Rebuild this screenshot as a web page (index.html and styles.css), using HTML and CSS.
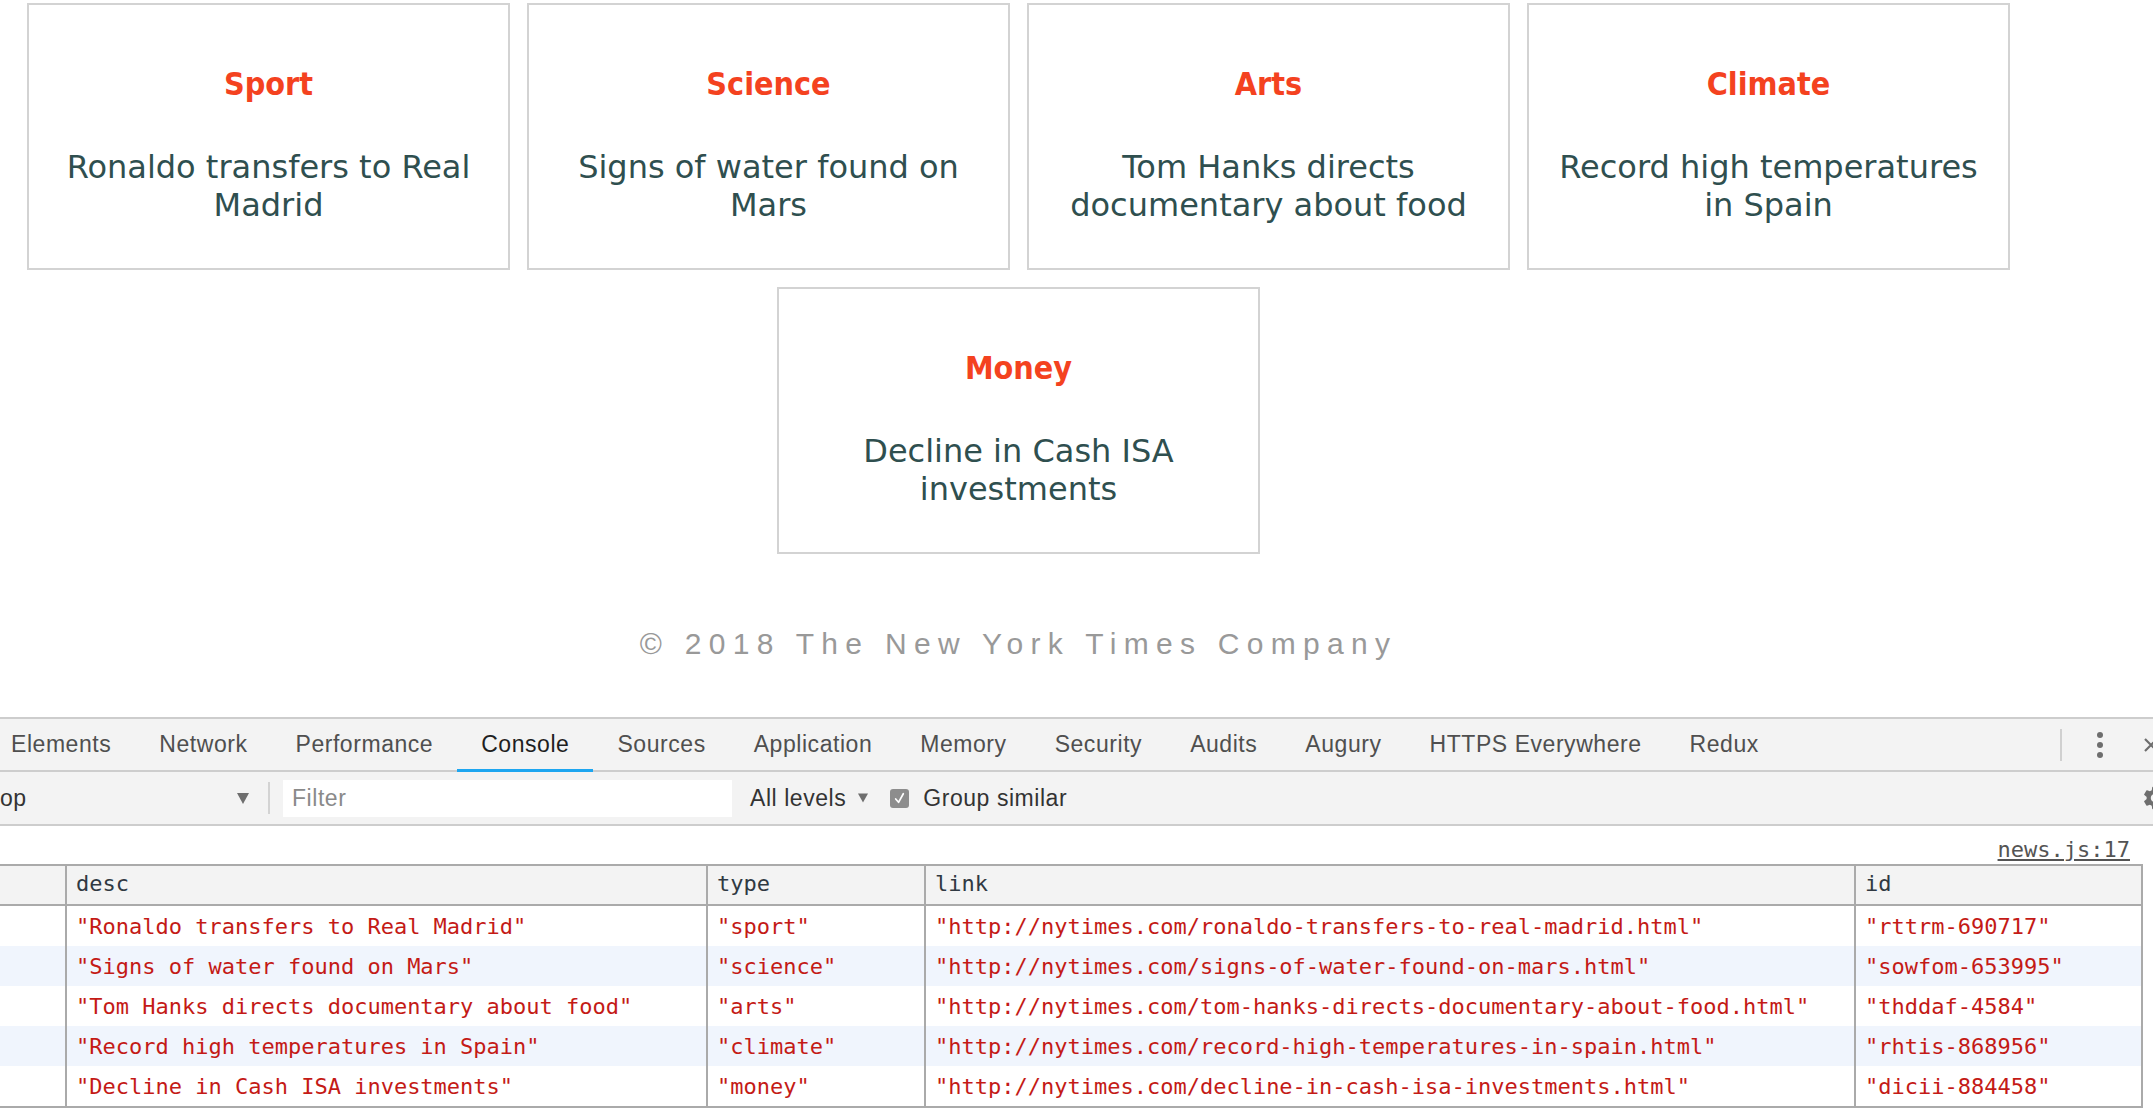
FILE: index.html
```html
<!DOCTYPE html>
<html lang="en">
<head>
<meta charset="utf-8">
<title>News</title>
<link rel="stylesheet" href="styles.css">
</head>
<body>
<div class="page">
  <section class="cards">
    <article class="card">
      <h2 class="card-type">Sport</h2>
      <p class="card-desc">Ronaldo transfers to Real Madrid</p>
    </article>
    <article class="card">
      <h2 class="card-type">Science</h2>
      <p class="card-desc">Signs of water found on Mars</p>
    </article>
    <article class="card">
      <h2 class="card-type">Arts</h2>
      <p class="card-desc">Tom Hanks directs documentary about food</p>
    </article>
    <article class="card">
      <h2 class="card-type">Climate</h2>
      <p class="card-desc">Record high temperatures in Spain</p>
    </article>
    <article class="card">
      <h2 class="card-type">Money</h2>
      <p class="card-desc">Decline in Cash ISA investments</p>
    </article>
  </section>
  <footer class="copyright">© 2018 The New York Times Company</footer>
</div>

<div class="devtools">
  <div class="tabbar">
    <nav class="tabs">
      <span class="tab">Elements</span>
      <span class="tab">Network</span>
      <span class="tab">Performance</span>
      <span class="tab active">Console</span>
      <span class="tab">Sources</span>
      <span class="tab">Application</span>
      <span class="tab">Memory</span>
      <span class="tab">Security</span>
      <span class="tab">Audits</span>
      <span class="tab">Augury</span>
      <span class="tab">HTTPS Everywhere</span>
      <span class="tab">Redux</span>
    </nav>
    <div class="tab-actions">
      <span class="vsep"></span>
      <span class="kebab"><i></i><i></i><i></i></span>
      <svg class="close-icon" viewBox="0 0 16 16" width="16" height="16"><path d="M2 2 L14 14 M14 2 L2 14" stroke="#6e6e6e" stroke-width="2.2" fill="none"/></svg>
    </div>
  </div>

  <div class="filterbar">
    <div class="context">
      <span class="context-name">top</span>
      <svg class="dd-arrow" viewBox="0 0 12 11" width="12" height="11"><path d="M0 0 H12 L6 11 Z" fill="#6e6e6e"/></svg>
    </div>
    <span class="fsep"></span>
    <div class="filter-input">Filter</div>
    <div class="levels">All levels<svg class="dd-arrow small" viewBox="0 0 12 11" width="10" height="10"><path d="M0 0 H12 L6 11 Z" fill="#6e6e6e"/></svg></div>
    <label class="group-similar">
      <span class="checkbox"><svg viewBox="0 0 20 20" width="19" height="19"><path d="M6 10.5 L9 14 L14 5" stroke="#fff" stroke-width="1.8" fill="none" stroke-linecap="round" stroke-linejoin="round"/></svg></span>
      Group similar
    </label>
    <span class="spacer"></span>
    <svg class="gear" viewBox="0 0 24 24" width="28" height="28"><path fill="#6e6e6e" d="M19.14 12.94c.04-.3.06-.61.06-.94 0-.32-.02-.64-.07-.94l2.03-1.58c.18-.14.23-.41.12-.61l-1.92-3.32c-.12-.22-.37-.29-.59-.22l-2.39.96c-.5-.38-1.03-.7-1.62-.94l-.36-2.540c-.04-.24-.24-.41-.48-.41h-3.84c-.24 0-.43.17-.47.41l-.36 2.54c-.59.24-1.130.57-1.62.94l-2.39-.96c-.22-.08-.47 0-.59.22L2.74 8.87c-.12.21-.08.47.12.61l2.03 1.58c-.05.3-.09.63-.09.94s.02.64.07.94l-2.03 1.58c-.18.14-.23.41-.12.61l1.92 3.32c.12.22.37.29.59.22l2.39-.96c.5.38 1.03.7 1.620.94l.36 2.54c.05.24.24.41.48.41h3.84c.24 0 .44-.17.47-.41l.36-2.54c.59-.24 1.13-.56 1.62-.94l2.39.96c.22.08.47 0 .59-.22l1.92-3.32c.12-.22.07-.47-.12-.61l-2.01-1.58zM12 15.6c-1.98 0-3.6-1.62-3.6-3.6s1.62-3.6 3.6-3.6 3.6 1.62 3.6 3.6-1.62 3.6-3.6 3.6z"/></svg>
  </div>

  <div class="console">
    <div class="msg-source"><a class="source-link">news.js:17</a></div>
    <table class="grid">
      <thead>
        <tr>
          <th class="c-index"></th>
          <th class="c-desc">desc</th>
          <th class="c-type">type</th>
          <th class="c-link">link</th>
          <th class="c-id">id</th>
        </tr>
      </thead>
      <tbody>
        <tr>
          <td></td>
          <td>"Ronaldo transfers to Real Madrid"</td>
          <td>"sport"</td>
          <td>"http://nytimes.com/ronaldo-transfers-to-real-madrid.html"</td>
          <td>"rttrm-690717"</td>
        </tr>
        <tr>
          <td></td>
          <td>"Signs of water found on Mars"</td>
          <td>"science"</td>
          <td>"http://nytimes.com/signs-of-water-found-on-mars.html"</td>
          <td>"sowfom-653995"</td>
        </tr>
        <tr>
          <td></td>
          <td>"Tom Hanks directs documentary about food"</td>
          <td>"arts"</td>
          <td>"http://nytimes.com/tom-hanks-directs-documentary-about-food.html"</td>
          <td>"thddaf-4584"</td>
        </tr>
        <tr>
          <td></td>
          <td>"Record high temperatures in Spain"</td>
          <td>"climate"</td>
          <td>"http://nytimes.com/record-high-temperatures-in-spain.html"</td>
          <td>"rhtis-868956"</td>
        </tr>
        <tr>
          <td></td>
          <td>"Decline in Cash ISA investments"</td>
          <td>"money"</td>
          <td>"http://nytimes.com/decline-in-cash-isa-investments.html"</td>
          <td>"dicii-884458"</td>
        </tr>
      </tbody>
    </table>
  </div>
</div>
</body>
</html>
```

FILE: styles.css
```css
html, body {
  margin: 0;
  padding: 0;
}

body {
  width: 2153px;
  height: 1117px;
  overflow: hidden;
  background: #ffffff;
}

/* ---------- page ---------- */
.page {
  width: 2037px;
  height: 717px;
  box-sizing: border-box;
  padding-top: 3px;
}

.cards {
  display: flex;
  flex-wrap: wrap;
  justify-content: center;
  gap: 17px;
}

.card {
  width: 483px;
  box-sizing: border-box;
  border: 2px solid #d3d3d3;
  padding: 61px 20px 44px;
  text-align: center;
}

.card-type {
  margin: 0 0 45px;
  font-family: "DejaVu Sans Condensed", "DejaVu Sans", sans-serif;
  font-stretch: condensed;
  font-weight: bold;
  font-size: 32px;
  line-height: 37px;
  color: #f4421f;
}

.card-desc {
  margin: 0;
  font-family: "DejaVu Sans", sans-serif;
  font-size: 32px;
  line-height: 38px;
  color: #2f4f4f;
}

.copyright {
  margin-top: 73px;
  text-align: center;
  font-family: "Liberation Sans", Arial, sans-serif;
  font-size: 30px;
  line-height: 34px;
  letter-spacing: 7.3px;
  color: #999999;
}

/* ---------- devtools ---------- */
.devtools {
  font-family: "Liberation Sans", Arial, sans-serif;
  font-size: 23px;
  letter-spacing: 0.55px;
  color: #333333;
}

.tabbar {
  display: flex;
  align-items: stretch;
  height: 51px;
  background: #f3f3f3;
  border-top: 2px solid #cdcdcd;
  border-bottom: 2px solid #cdcdcd;
}

.tabs {
  display: flex;
  align-items: stretch;
  margin-left: -13px;
  flex: 1;
}

.tab {
  position: relative;
  display: flex;
  align-items: center;
  padding: 0 24px;
  color: #4f4f4f;
  white-space: nowrap;
}

.tab.active {
  color: #1f1f1f;
}

.tab.active::after {
  content: "";
  position: absolute;
  left: 0;
  right: 0;
  bottom: -2px;
  height: 3px;
  background: #1ea6f0;
}

.tab-actions {
  display: flex;
  align-items: center;
}

.vsep {
  width: 2px;
  height: 32px;
  background: #d0d0d0;
}

.kebab {
  display: flex;
  flex-direction: column;
  gap: 4px;
  margin-left: 35px;
}

.kebab i {
  display: block;
  width: 6px;
  height: 6px;
  border-radius: 50%;
  background: #6e6e6e;
}

.close-icon {
  margin-left: 40px;
  margin-right: -6px;
}

.filterbar {
  display: flex;
  align-items: center;
  height: 52px;
  background: #f3f3f3;
  border-bottom: 2px solid #cdcdcd;
  white-space: nowrap;
}

.context {
  display: flex;
  align-items: center;
  justify-content: space-between;
  width: 263px;
  margin-left: -7px;
  padding-right: 7px;
  box-sizing: border-box;
}

.dd-arrow {
  display: block;
}

.dd-arrow.small {
  margin-left: 12px;
}

.fsep {
  width: 2px;
  height: 32px;
  margin-left: 12px;
  background: #d3d3d3;
}

.filter-input {
  width: 449px;
  height: 37px;
  margin-left: 13px;
  padding-left: 9px;
  box-sizing: border-box;
  background: #ffffff;
  color: #8a8a8a;
  line-height: 37px;
}

.levels {
  display: flex;
  align-items: center;
  margin-left: 18px;
  color: #333333;
}

.group-similar {
  display: flex;
  align-items: center;
  gap: 14px;
  margin-left: 22px;
  color: #333333;
}

.checkbox {
  display: block;
  width: 19px;
  height: 19px;
  border-radius: 3px;
  background: #8d8d8d;
}

.checkbox svg {
  display: block;
}

.spacer {
  flex: 1;
}

.gear {
  margin-right: -16px;
}

.console {
  background: #ffffff;
  padding-top: 11px;
  font-family: "DejaVu Sans Mono", "Liberation Mono", monospace;
  font-size: 22px;
  letter-spacing: 0;
}

.msg-source {
  height: 26px;
  line-height: 26px;
  text-align: right;
  padding-right: 23px;
}

.source-link {
  color: #545454;
  text-decoration: underline;
}

.grid {
  margin-top: 1px;
  margin-left: -2px;
  width: 2145px;
  table-layout: fixed;
  border-collapse: separate;
  border-spacing: 0;
  border: 2px solid #aaaaaa;
}

.grid th,
.grid td {
  box-sizing: border-box;
  padding: 0 9px;
  text-align: left;
  white-space: nowrap;
  overflow: hidden;
  vertical-align: middle;
}

.grid th + th,
.grid td + td {
  border-left: 2px solid #aaaaaa;
}

.grid th {
  height: 40px;
  padding-bottom: 3px;
  background: #f3f3f3;
  border-bottom: 2px solid #aaaaaa;
  font-weight: normal;
  color: #303942;
}

.grid td {
  height: 40px;
  padding-top: 1px;
  color: #c41a16;
}

.grid tbody tr:nth-child(even) td {
  background: #f0f5fd;
}

.c-index { width: 65px; }
.c-desc { width: 641px; }
.c-type { width: 218px; }
.c-link { width: 930px; }
.c-id { width: 287px; }
```
